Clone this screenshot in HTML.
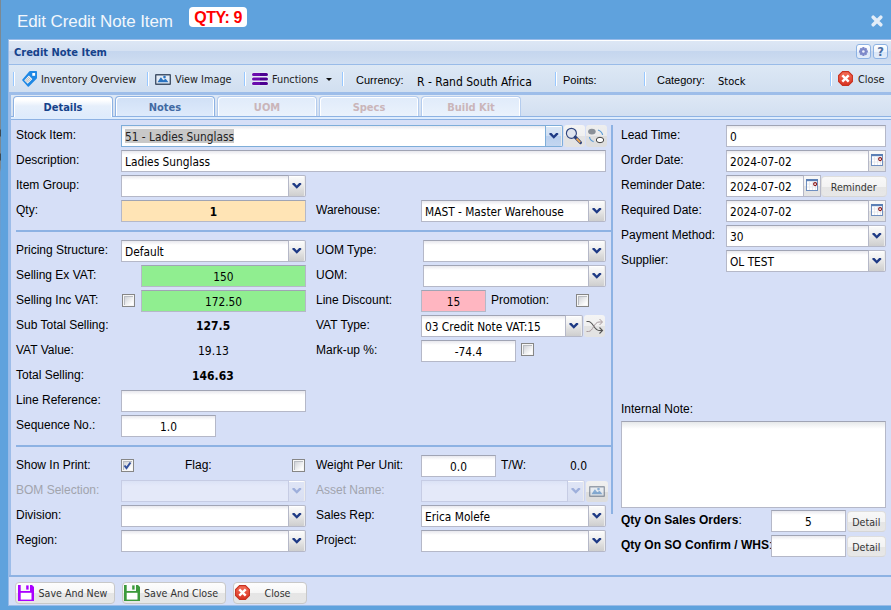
<!DOCTYPE html>
<html><head><meta charset="utf-8"><title>Edit Credit Note Item</title>
<style>
*{box-sizing:border-box;margin:0;padding:0}
html,body{width:891px;height:610px;overflow:hidden;background:#5fa2dd}
body{position:relative;font-family:"Liberation Sans",Arial,sans-serif;font-size:12px;color:#000}
.a{position:absolute;white-space:nowrap}
.tah{font-family:"DejaVu Sans Condensed","DejaVu Sans",sans-serif}
#edge{left:0;top:0;width:1px;height:610px;background:linear-gradient(#7b8993 0,#7b8993 129px,#3f4a52 130px,#3f4a52 136px,#7b8993 137px,#7b8993 153px,#3f4a52 154px,#3f4a52 160px,#7b8993 161px,#7b8993 168px,#6f9bc9 172px,#689fd3 240px,#5fa2dd 300px)}
#title{left:17px;top:11px;font-size:17px;line-height:22px;color:#f3f7fc;letter-spacing:-0.09px}
#qty{left:189px;top:7px;width:58px;height:20px;background:#fff;border-radius:4px;color:#ff0000;font-weight:bold;font-size:16px;line-height:22px;text-align:center;letter-spacing:-0.45px}
#panel{left:8px;top:39px;width:890px;height:567px;background:#9dbde9;border:1px solid #99bbe8}
#phead{left:9px;top:40px;width:882px;height:24px;background:linear-gradient(#fff 0,#fff 1px,#dde7f5 1px,#d5e1f2 10.5px,#c5d6ee 11.5px,#c9d9ef 17px,#d0def2 24px)}
#ptitle{left:14px;top:46px;font-size:11px;font-weight:bold;color:#15428b;line-height:14px}
#tbar{left:9px;top:65px;width:882px;height:27px;background:linear-gradient(#dde8f5,#d1dff0)}
#hline{left:9px;top:64px;width:882px;height:1px;background:#99bbe8}
#tstrip{left:11px;top:95px;width:880px;height:24px;background:linear-gradient(#dee8f5,#d2dff1 21px)}
#tspacer{left:11px;top:116px;width:880px;height:3px;background:#deecfd;border-top:1px solid #8db2e3}
#tline{left:11px;top:119px;width:880px;height:1px;background:#8db2e3}
#bodybg{left:11px;top:120px;width:880px;height:455px;background:#d6dff7}
.lbl{font-size:12px;line-height:14px}
.f{position:absolute;height:22px;background:#fff;border:1px solid #b5b8c8;border-top-color:#a0a4b4;font-family:"DejaVu Sans Condensed","DejaVu Sans",sans-serif;font-size:11.8px;line-height:20px;padding:1px 3px 0 3px;white-space:nowrap;overflow:hidden;background-image:linear-gradient(#e8e8ee,#fff 4px)}
.c{text-align:center}
.trg{position:absolute;width:17px;height:22px;border:1px solid #b5b8c8;border-left:0;border-radius:0 2px 2px 0;background:linear-gradient(#fcfcfc,#f1f1f1 35%,#dcdcdc 70%,#cecece);box-shadow:inset -1px 0 0 #ececec,inset 0 1px 0 #fff}
.trg svg{position:absolute;left:3px;top:6.5px}
.sep{position:absolute;height:2px;background:#8db2e3}
.btn{position:absolute;height:21px;border:1px solid #dedede;border-bottom-color:#d6d6d6;border-radius:4px;background:linear-gradient(#f8f8f8,#f3f3f3 50%,#e5e5e5 51%,#e7e7e7);font-family:"DejaVu Sans Condensed","DejaVu Sans",sans-serif;font-size:10.6px;line-height:21px;color:#333;white-space:nowrap;text-align:center}
.cb{position:absolute;width:13px;height:13px;border:1px solid #868686;background:#f6f6f6}
.cb:before{content:"";position:absolute;left:1px;top:1px;width:9px;height:9px;background:linear-gradient(135deg,#c9ccd2,#e9eaec 50%,#fdfdfd 85%);box-shadow:inset 1px 1px 0 #b9bcc2}
.tab{position:absolute;top:96px;height:20px;border:1px solid #8db2e3;border-bottom:0;border-radius:4px 4px 0 0;background:linear-gradient(#d0e0f6,#deeafb);box-shadow:inset 1px 1px 0 #fff,inset -1px 0 0 #fff;font-family:"DejaVu Sans Condensed","DejaVu Sans",sans-serif;font-weight:bold;font-size:11px;line-height:21px;text-align:center;color:#416aa3}
.tab.dis{color:#cab5b9;border-color:#b4ccee;background:linear-gradient(#e0ebfa,#eaf2fc)}
.tab.act{height:21px;background:linear-gradient(#fff,#fff 3px,#e6effb 9px,#deebfc);color:#15428b;z-index:3}
.tsep{position:absolute;top:72px;width:2px;height:14px;border-left:1px solid #98c8ff;border-right:1px solid #fff}
.tt{font-family:"DejaVu Sans Condensed","DejaVu Sans",sans-serif;font-size:10.8px;line-height:14px;color:#222}
.ibtn{position:absolute;border-radius:3px;background:linear-gradient(#f4f4f4,#f0f0f0 50%,#e3e3e3 51%,#e3e3e3)}
.dtrg{position:absolute;width:17px;height:22px;border:1px solid #b5b8c8;border-left:0;background:linear-gradient(#f8f8f8,#f2f2f2 50%,#e2e2e2 51%,#e4e4e4)}
.tool{position:absolute;top:44px;width:15px;height:15px;border:1px solid #8db2e3;border-radius:3px;background:linear-gradient(#fff,#eef4fc 50%,#d9e6f8 51%,#e3ecf9)}
</style></head><body>
<div id="edge" class="a"></div>
<div id="title" class="a">Edit Credit Note Item</div>
<div id="qty" class="a">QTY: 9</div>
<svg class="a" style="left:871px;top:15px" width="12" height="12" viewBox="0 0 12 12"><path d="M2.2 2.2 L9.8 9.8 M9.8 2.2 L2.2 9.8" stroke="#e3edf8" stroke-width="3.5" stroke-linecap="round"/></svg>
<div id="panel" class="a"></div>
<div id="phead" class="a"></div><div id="hline" class="a"></div>
<div id="ptitle" class="a tah">Credit Note Item</div>
<div class="tool" style="left:856px"><svg width="15" height="15" viewBox="0 0 15 15" style="position:absolute;left:-1px;top:-1px"><g transform="translate(7.4,7.5) scale(0.86)"><rect x="-1.35" y="-5.2" width="2.7" height="10.4" rx=".7" fill="#7d88c9" transform="rotate(0)"/><rect x="-1.35" y="-5.2" width="2.7" height="10.4" rx=".7" fill="#7d88c9" transform="rotate(45)"/><rect x="-1.35" y="-5.2" width="2.7" height="10.4" rx=".7" fill="#7d88c9" transform="rotate(90)"/><rect x="-1.35" y="-5.2" width="2.7" height="10.4" rx=".7" fill="#7d88c9" transform="rotate(135)"/><circle r="3.7" fill="#7d88c9"/><circle r="1.5" fill="#eef1fb"/></g></svg></div>
<div class="tool" style="left:873px;font-family:'DejaVu Sans',sans-serif;font-weight:bold;font-size:11.5px;line-height:15px;text-align:center;color:#4b6da3">?</div>
<div id="tbar" class="a"></div>
<div id="tstrip" class="a"></div><div id="tspacer" class="a"></div><div id="tline" class="a"></div><div id="bodybg" class="a"></div>
<div class="tsep" style="left:13px"></div>
<div class="tsep" style="left:147px"></div>
<div class="tsep" style="left:244px"></div>
<div class="tsep" style="left:342px"></div>
<div class="tsep" style="left:555px"></div>
<div class="tsep" style="left:644px"></div>
<div class="tsep" style="left:830px"></div>
<div class="a tt" style="left:41px;top:73px">Inventory Overview</div>
<div class="a tt" style="left:175px;top:73px">View Image</div>
<div class="a tt" style="left:272px;top:73px">Functions</div>
<div class="a" style="left:326px;top:78px;width:0;height:0;border:3px solid transparent;border-top:3px solid #111;border-bottom:0"></div>
<div class="a" style="left:356px;top:73px;font-size:11px;line-height:14px">Currency:</div>
<div class="a tah" style="left:417px;top:74px;font-size:12px;line-height:16px">R - Rand South Africa</div>
<div class="a" style="left:563px;top:73px;font-size:11px;line-height:14px">Points:</div>
<div class="a" style="left:657px;top:73px;font-size:11px;line-height:14px">Category:</div>
<div class="a tah" style="left:718px;top:74px;font-size:11px;line-height:16px">Stock</div>
<div class="a tt" style="left:858px;top:73px">Close</div>
<svg class="a" style="left:22px;top:71px;" width="15" height="16" viewBox="0 0 15 16"><path d="M8 0 H14.2 Q15 0 15 .8 V6.8 Q15 7.3 14.6 7.7 L6.9 15.4 Q6.3 16 5.7 15.4 L.4 9.6 Q-.1 9 .4 8.4 L7.2 .4 Q7.5 0 8 0 Z" fill="#1e88e5"/><rect x="10.3" y="2" width="2.8" height="2.8" fill="#fff"/><g transform="translate(6.3,8.6) rotate(45)"><rect x="-2.4" y="-3.3" width="4.8" height="6.6" fill="#fff"/><path d="M-1.2 -3.3V3.3 M0 -3.3V3.3 M1.2 -3.3V3.3 M-2.4 -1.6H2.4 M-2.4 0H2.4 M-2.4 1.6H2.4" stroke="#9a9a9a" stroke-width=".45"/></g></svg>
<svg class="a" style="left:155px;top:73.5px;opacity:1.0;" width="16" height="11" viewBox="0 0 16 11"><rect x=".7" y=".7" width="14.6" height="9.6" rx=".4" fill="#e4ecf6" stroke="#44546a" stroke-width="1.4"/><path d="M2.5 8.3 L5.6 3.6 Q5.9 3.2 6.2 3.6 L8.2 6.3 L10.2 4.9 Q10.6 4.6 10.9 5 L13.5 8.3 Z" fill="#2a73c0"/><circle cx="9.5" cy="3.1" r="1.3" fill="#2a73c0"/></svg>
<svg class="a" style="left:251px;top:72px;" width="18" height="14" viewBox="0 0 18 14"><g><rect x=".5" y="0.5" width="17" height="4" rx="2" fill="#f4f0fa"/><rect x=".5" y="5.0" width="17" height="4" rx="2" fill="#f4f0fa"/><rect x=".5" y="9.5" width="17" height="4" rx="2" fill="#f4f0fa"/><path d="M2.5 1 H9 V4 H2.5 A1.5 1.5 0 0 1 2.5 1 Z" fill="#6a0dad"/><path d="M9 1 H15.5 A1.5 1.5 0 0 1 15.5 4 H9 Z" fill="#4b0092"/><path d="M2.5 5.5 H9 V8.5 H2.5 A1.5 1.5 0 0 1 2.5 5.5 Z" fill="#6a0dad"/><path d="M9 5.5 H15.5 A1.5 1.5 0 0 1 15.5 8.5 H9 Z" fill="#4b0092"/><path d="M2.5 10 H9 V13 H2.5 A1.5 1.5 0 0 1 2.5 10 Z" fill="#6a0dad"/><path d="M9 10 H15.5 A1.5 1.5 0 0 1 15.5 13 H9 Z" fill="#4b0092"/></g></svg>
<svg class="a" style="left:838px;top:71px;" width="15" height="15" viewBox="0 0 15 15"><defs><linearGradient id="sg838" x1="0" y1="0" x2="0" y2="1"><stop offset="0" stop-color="#f4705a"/><stop offset="1" stop-color="#d93222"/></linearGradient></defs><path d="M4.6 .6 H10.4 L14.4 4.6 V10.4 L10.4 14.4 H4.6 L.6 10.4 V4.6 Z" fill="url(#sg838)" stroke="#c8301f" stroke-width="1.1"/><path d="M4.3 4.3 L10.7 10.7 M10.7 4.3 L4.3 10.7" stroke="#fff" stroke-width="2.4"/></svg>
<div class="tab act" style="left:13px;width:100px">Details</div>
<div class="tab " style="left:115px;width:100px">Notes</div>
<div class="tab dis" style="left:217px;width:100px">UOM</div>
<div class="tab dis" style="left:319px;width:100px">Specs</div>
<div class="tab dis" style="left:421px;width:100px">Build Kit</div>
<div class="a lbl" style="left:16px;top:128px;">Stock Item:</div>
<div class="f " style="left:121px;top:125px;width:425px;border-color:#7eadd9;"><span style="position:absolute;left:3px;top:3px;width:108.5px;height:14px;background:#c8c8c8"></span><span style="position:relative;color:#222">51 - Ladies Sunglass</span></div>
<div class="trg" style="left:546px;top:125px;border-color:#7eadd9;background:linear-gradient(#dbe7f6,#cfdff3 50%,#b9cfee 51%,#c3d6f0)"><svg width="10" height="7" viewBox="0 0 10 7"><path d="M0 .9 L.9 0 L2.5 0 L4.8 2.4 L7.1 0 L8.7 0 L9.6 .9 L4.8 5.7 Z" fill="#1e3a85"/></svg></div>
<div class="ibtn" style="left:564px;top:125px;width:21px;height:22px;"><svg width="21" height="22" viewBox="0 0 21 22" style="position:absolute;left:0;top:1px"><circle cx="7.4" cy="7.3" r="5" fill="#dfe4ee" stroke="#2f447e" stroke-width="1.15"/><path d="M11.2 11.2 L16.4 16.5" stroke="#2a3f7a" stroke-width="3.2" stroke-linecap="round"/><path d="M12.6 12.6 L16.2 16.3" stroke="#f0a850" stroke-width="1.9" stroke-linecap="butt"/></svg></div>
<div class="ibtn" style="left:586px;top:125px;width:21px;height:22px;background:linear-gradient(#eee,#eaeaea 50%,#dedede 51%,#dedede);"><svg width="21" height="22" viewBox="0 0 21 22" style="position:absolute;left:0;top:1px"><ellipse cx="5.9" cy="5.6" rx="3.8" ry="2.9" fill="#8a9098"/><ellipse cx="14" cy="14" rx="3.7" ry="2.7" fill="#fff" stroke="#444" stroke-width="1"/><path d="M12 4 Q16 5.5 16.6 9" fill="none" stroke="#5b9bd5" stroke-width="1.2"/><path d="M3.5 11 Q4 14.5 7.6 15.6" fill="none" stroke="#5b9bd5" stroke-width="1.2"/></svg></div>
<div class="a lbl" style="left:16px;top:153px;">Description:</div>
<div class="f " style="left:121px;top:150px;width:485px;">Ladies Sunglass</div>
<div class="a lbl" style="left:16px;top:178px;">Item Group:</div>
<div class="f " style="left:121px;top:175px;width:168px;"></div>
<div class="trg" style="left:289px;top:175px;"><svg width="10" height="7" viewBox="0 0 10 7"><path d="M0 .9 L.9 0 L2.5 0 L4.8 2.4 L7.1 0 L8.7 0 L9.6 .9 L4.8 5.7 Z" fill="#1e3a85"/></svg></div>
<div class="a lbl" style="left:16px;top:203px;">Qty:</div>
<div class="f c" style="left:121px;top:200px;width:185px;background:#ffe4b5;"><b>1</b></div>
<div class="a lbl" style="left:316px;top:203px;">Warehouse:</div>
<div class="f " style="left:421px;top:200px;width:168px;">MAST - Master Warehouse</div>
<div class="trg" style="left:589px;top:200px;"><svg width="10" height="7" viewBox="0 0 10 7"><path d="M0 .9 L.9 0 L2.5 0 L4.8 2.4 L7.1 0 L8.7 0 L9.6 .9 L4.8 5.7 Z" fill="#1e3a85"/></svg></div>
<div class="sep" style="left:16px;top:230px;width:597px"></div>
<div class="a lbl" style="left:16px;top:243px;">Pricing Structure:</div>
<div class="f " style="left:121px;top:240px;width:168px;">Default</div>
<div class="trg" style="left:289px;top:240px;"><svg width="10" height="7" viewBox="0 0 10 7"><path d="M0 .9 L.9 0 L2.5 0 L4.8 2.4 L7.1 0 L8.7 0 L9.6 .9 L4.8 5.7 Z" fill="#1e3a85"/></svg></div>
<div class="a lbl" style="left:16px;top:268px;">Selling Ex VAT:</div>
<div class="f c" style="left:141px;top:265px;width:165px;background:#90ee90;">150</div>
<div class="a lbl" style="left:16px;top:293px;">Selling Inc VAT:</div>
<div class="cb" style="left:122px;top:294px"></div>
<div class="f c" style="left:141px;top:290px;width:165px;background:#90ee90;">172.50</div>
<div class="a lbl" style="left:16px;top:318px;">Sub Total Selling:</div>
<div class="a tah" style="left:196px;top:318px;font-size:12px;line-height:16px;"><b>127.5</b></div>
<div class="a lbl" style="left:16px;top:343px;">VAT Value:</div>
<div class="a tah" style="left:198px;top:343px;font-size:12px;line-height:16px;">19.13</div>
<div class="a lbl" style="left:16px;top:368px;">Total Selling:</div>
<div class="a tah" style="left:192px;top:368px;font-size:12px;line-height:16px;"><b>146.63</b></div>
<div class="a lbl" style="left:16px;top:393px;">Line Reference:</div>
<div class="f " style="left:121px;top:390px;width:185px;"></div>
<div class="a lbl" style="left:16px;top:418px;">Sequence No.:</div>
<div class="f c" style="left:121px;top:415px;width:95px;">1.0</div>
<div class="a lbl" style="left:316px;top:243px;">UOM Type:</div>
<div class="f " style="left:423px;top:240px;width:166px;"></div>
<div class="trg" style="left:589px;top:240px;"><svg width="10" height="7" viewBox="0 0 10 7"><path d="M0 .9 L.9 0 L2.5 0 L4.8 2.4 L7.1 0 L8.7 0 L9.6 .9 L4.8 5.7 Z" fill="#1e3a85"/></svg></div>
<div class="a lbl" style="left:316px;top:268px;">UOM:</div>
<div class="f " style="left:423px;top:265px;width:166px;"></div>
<div class="trg" style="left:589px;top:265px;"><svg width="10" height="7" viewBox="0 0 10 7"><path d="M0 .9 L.9 0 L2.5 0 L4.8 2.4 L7.1 0 L8.7 0 L9.6 .9 L4.8 5.7 Z" fill="#1e3a85"/></svg></div>
<div class="a lbl" style="left:316px;top:293px;">Line Discount:</div>
<div class="f c" style="left:421px;top:290px;width:65px;background:#ffb6c1;">15</div>
<div class="a lbl" style="left:491px;top:293px;">Promotion:</div>
<div class="cb" style="left:576px;top:294px"></div>
<div class="a lbl" style="left:316px;top:318px;">VAT Type:</div>
<div class="f " style="left:421px;top:315px;width:145px;">03 Credit Note VAT:15</div>
<div class="trg" style="left:566px;top:315px;"><svg width="10" height="7" viewBox="0 0 10 7"><path d="M0 .9 L.9 0 L2.5 0 L4.8 2.4 L7.1 0 L8.7 0 L9.6 .9 L4.8 5.7 Z" fill="#1e3a85"/></svg></div>
<div class="ibtn" style="left:584px;top:315px;width:21px;height:22px;"><svg width="21" height="22" viewBox="0 0 21 22" style="position:absolute;left:0;top:1px"><path d="M2.5 5.5 H4.5 C9 5.5 10 14.5 15 14.5 H18" fill="none" stroke="#555" stroke-width="1.1"/><path d="M15.5 11.5 L18.5 14.5 L15.5 17.5" fill="none" stroke="#555" stroke-width="1.1"/><path d="M2.5 15.5 H4.5 C9 15.5 10 6 15 6 H18" fill="none" stroke="#a89a9e" stroke-width="1"/><path d="M15.5 3 L18.5 6 L15.5 9" fill="none" stroke="#a89a9e" stroke-width="1"/></svg></div>
<div class="a lbl" style="left:316px;top:343px;">Mark-up %:</div>
<div class="f c" style="left:421px;top:340px;width:95px;">-74.4</div>
<div class="cb" style="left:521px;top:343px"></div>
<div class="sep" style="left:16px;top:445px;width:597px"></div>
<div class="a lbl" style="left:16px;top:458px;">Show In Print:</div>
<div class="cb" style="left:121px;top:459px"><svg width="11" height="11" viewBox="0 0 11 11" style="position:absolute;left:0;top:0"><path d="M2.5 5.5 L4.5 8 L8.5 2.5" fill="none" stroke="#33509c" stroke-width="2"/></svg></div>
<div class="a lbl" style="left:185px;top:458px;">Flag:</div>
<div class="cb" style="left:292px;top:459px"></div>
<div class="a lbl" style="left:16px;top:483px;color:#a1a4ad">BOM Selection:</div>
<div class="f " style="left:121px;top:480px;width:168px;background:linear-gradient(#dbe2f6,#e4e9f9 5px);border-color:#c6cce4;"></div>
<div class="trg" style="left:289px;top:480px;border-color:#cdd3e9;background:linear-gradient(#dfe5f6,#d9dff2);"><svg width="10" height="7" viewBox="0 0 10 7"><path d="M0 .9 L.9 0 L2.5 0 L4.8 2.4 L7.1 0 L8.7 0 L9.6 .9 L4.8 5.7 Z" fill="#9eafdb"/></svg></div>
<div class="a lbl" style="left:16px;top:508px;">Division:</div>
<div class="f " style="left:121px;top:505px;width:168px;"></div>
<div class="trg" style="left:289px;top:505px;"><svg width="10" height="7" viewBox="0 0 10 7"><path d="M0 .9 L.9 0 L2.5 0 L4.8 2.4 L7.1 0 L8.7 0 L9.6 .9 L4.8 5.7 Z" fill="#1e3a85"/></svg></div>
<div class="a lbl" style="left:16px;top:533px;">Region:</div>
<div class="f " style="left:121px;top:530px;width:168px;"></div>
<div class="trg" style="left:289px;top:530px;"><svg width="10" height="7" viewBox="0 0 10 7"><path d="M0 .9 L.9 0 L2.5 0 L4.8 2.4 L7.1 0 L8.7 0 L9.6 .9 L4.8 5.7 Z" fill="#1e3a85"/></svg></div>
<div class="a lbl" style="left:316px;top:458px;">Weight Per Unit:</div>
<div class="f c" style="left:421px;top:455px;width:75px;">0.0</div>
<div class="a lbl" style="left:501px;top:458px;">T/W:</div>
<div class="a tah" style="left:570px;top:458px;font-size:12px;line-height:16px;">0.0</div>
<div class="a lbl" style="left:316px;top:483px;color:#a1a4ad">Asset Name:</div>
<div class="f " style="left:421px;top:480px;width:147px;background:linear-gradient(#dbe2f6,#e4e9f9 5px);border-color:#c6cce4;"></div>
<div class="trg" style="left:568px;top:480px;border-color:#cdd3e9;background:linear-gradient(#dfe5f6,#d9dff2);"><svg width="10" height="7" viewBox="0 0 10 7"><path d="M0 .9 L.9 0 L2.5 0 L4.8 2.4 L7.1 0 L8.7 0 L9.6 .9 L4.8 5.7 Z" fill="#9eafdb"/></svg></div>
<div class="ibtn" style="left:586px;top:480.5px;width:22px;height:21px;background:linear-gradient(#f0f0f0,#ebebeb 50%,#dddddd 51%,#dddddd);"><svg width="22" height="21" viewBox="0 0 22 21" style="position:absolute;left:0;top:1px"></svg></div>
<svg class="a" style="left:589px;top:486px;opacity:0.5;" width="16" height="11" viewBox="0 0 16 11"><rect x=".7" y=".7" width="14.6" height="9.6" rx=".4" fill="#e4ecf6" stroke="#44546a" stroke-width="1.4"/><path d="M2.5 8.3 L5.6 3.6 Q5.9 3.2 6.2 3.6 L8.2 6.3 L10.2 4.9 Q10.6 4.6 10.9 5 L13.5 8.3 Z" fill="#2a73c0"/><circle cx="9.5" cy="3.1" r="1.3" fill="#2a73c0"/></svg>
<div class="a lbl" style="left:316px;top:508px;">Sales Rep:</div>
<div class="f " style="left:421px;top:505px;width:168px;">Erica Molefe</div>
<div class="trg" style="left:589px;top:505px;"><svg width="10" height="7" viewBox="0 0 10 7"><path d="M0 .9 L.9 0 L2.5 0 L4.8 2.4 L7.1 0 L8.7 0 L9.6 .9 L4.8 5.7 Z" fill="#1e3a85"/></svg></div>
<div class="a lbl" style="left:316px;top:533px;">Project:</div>
<div class="f " style="left:421px;top:530px;width:168px;"></div>
<div class="trg" style="left:589px;top:530px;"><svg width="10" height="7" viewBox="0 0 10 7"><path d="M0 .9 L.9 0 L2.5 0 L4.8 2.4 L7.1 0 L8.7 0 L9.6 .9 L4.8 5.7 Z" fill="#1e3a85"/></svg></div>
<div class="a" style="left:611px;top:125px;width:2px;height:389px;background:#8db2e3"></div>
<div class="a lbl" style="left:621px;top:128px;">Lead Time:</div>
<div class="f " style="left:726px;top:125px;width:160px;">0</div>
<div class="a lbl" style="left:621px;top:153px;">Order Date:</div>
<div class="f " style="left:726px;top:150px;width:143px;">2024-07-02</div>
<div class="dtrg" style="left:869px;top:150px"></div>
<svg class="a" style="left:871px;top:154px;" width="12" height="12" viewBox="0 0 12 12"><rect x=".5" y=".5" width="11" height="11" fill="#fff" stroke="#6f8fc0" stroke-width="1"/><rect x="0" y="0" width="12" height="2.2" fill="#5b7fb5"/><path d="M3.5 2.5V11 M6.5 2.5V11 M9.5 2.5V11 M1 5H11 M1 8H11" stroke="#e3e6ec" stroke-width=".8"/><circle cx="9.1" cy="5.1" r="1.5" fill="#fff" stroke="#8b1a1a" stroke-width="1.1"/></svg>
<div class="a lbl" style="left:621px;top:178px;">Reminder Date:</div>
<div class="f " style="left:726px;top:175px;width:78px;">2024-07-02</div>
<div class="dtrg" style="left:804px;top:175px"></div>
<svg class="a" style="left:806px;top:179px;" width="12" height="12" viewBox="0 0 12 12"><rect x=".5" y=".5" width="11" height="11" fill="#fff" stroke="#6f8fc0" stroke-width="1"/><rect x="0" y="0" width="12" height="2.2" fill="#5b7fb5"/><path d="M3.5 2.5V11 M6.5 2.5V11 M9.5 2.5V11 M1 5H11 M1 8H11" stroke="#e3e6ec" stroke-width=".8"/><circle cx="9.1" cy="5.1" r="1.5" fill="#fff" stroke="#8b1a1a" stroke-width="1.1"/></svg>
<div class="btn" style="left:821px;top:175.5px;width:65.5px;">Reminder</div>
<div class="a lbl" style="left:621px;top:203px;">Required Date:</div>
<div class="f " style="left:726px;top:200px;width:143px;">2024-07-02</div>
<div class="dtrg" style="left:869px;top:200px"></div>
<svg class="a" style="left:871px;top:204px;" width="12" height="12" viewBox="0 0 12 12"><rect x=".5" y=".5" width="11" height="11" fill="#fff" stroke="#6f8fc0" stroke-width="1"/><rect x="0" y="0" width="12" height="2.2" fill="#5b7fb5"/><path d="M3.5 2.5V11 M6.5 2.5V11 M9.5 2.5V11 M1 5H11 M1 8H11" stroke="#e3e6ec" stroke-width=".8"/><circle cx="9.1" cy="5.1" r="1.5" fill="#fff" stroke="#8b1a1a" stroke-width="1.1"/></svg>
<div class="a lbl" style="left:621px;top:228px;">Payment Method:</div>
<div class="f " style="left:726px;top:225px;width:143px;">30</div>
<div class="trg" style="left:869px;top:225px;"><svg width="10" height="7" viewBox="0 0 10 7"><path d="M0 .9 L.9 0 L2.5 0 L4.8 2.4 L7.1 0 L8.7 0 L9.6 .9 L4.8 5.7 Z" fill="#1e3a85"/></svg></div>
<div class="a lbl" style="left:621px;top:253px;">Supplier:</div>
<div class="f " style="left:726px;top:250px;width:143px;">OL TEST</div>
<div class="trg" style="left:869px;top:250px;"><svg width="10" height="7" viewBox="0 0 10 7"><path d="M0 .9 L.9 0 L2.5 0 L4.8 2.4 L7.1 0 L8.7 0 L9.6 .9 L4.8 5.7 Z" fill="#1e3a85"/></svg></div>
<div class="a lbl" style="left:621px;top:402px;">Internal Note:</div>
<div class="f " style="left:621px;top:421px;width:265px;height:87px;background-image:linear-gradient(#e6e8ea,#fff 7px);"></div>
<div class="a lbl" style="left:621px;top:513px;"><b>Qty On Sales Orders</b>:</div>
<div class="f c" style="left:771px;top:510px;width:75px;">5</div>
<div class="btn" style="left:846.5px;top:510.5px;width:39.5px;">Detail</div>
<div class="a lbl" style="left:621px;top:538px;"><b>Qty On SO Confirm / WHS</b>:</div>
<div class="f c" style="left:771px;top:535px;width:75px;"></div>
<div class="btn" style="left:846.5px;top:535.5px;width:39.5px;">Detail</div>
<div class="a" style="left:9px;top:575px;width:882px;height:2px;background:#8db2e3"></div>
<div class="a" style="left:9px;top:577px;width:882px;height:28px;background:#d6dff7"></div>
<div class="btn" style="left:15px;top:582px;width:99.5px;height:21.5px;border-color:#c8c8c8;background:linear-gradient(#fdfdfd,#f6f6f6 49%,#e5e5e5 50%,#e6e6e6);"><span style="position:absolute;left:22.5px">Save And New</span></div>
<svg class="a" style="left:18px;top:585px;" width="16" height="16" viewBox="0 0 16 16"><path d="M0 0 H2.7 V6 H12 V0 H14 L16 2 V16 H0 Z" fill="#aa00ff"/><rect x="2.7" y="7.8" width="10.8" height="6.8" fill="#fff"/><rect x="8.2" y=".4" width="2.4" height="4.2" fill="#aa00ff"/></svg>
<div class="btn" style="left:122px;top:582px;width:104px;height:21.5px;border-color:#c8c8c8;background:linear-gradient(#fdfdfd,#f6f6f6 49%,#e5e5e5 50%,#e6e6e6);"><span style="position:absolute;left:21px">Save And Close</span></div>
<svg class="a" style="left:124px;top:585px;" width="16" height="16" viewBox="0 0 16 16"><path d="M0 0 H2.7 V6 H12 V0 H14 L16 2 V16 H0 Z" fill="#3c9a3c"/><rect x="2.7" y="7.8" width="10.8" height="6.8" fill="#fff"/><rect x="8.2" y=".4" width="2.4" height="4.2" fill="#3c9a3c"/></svg>
<div class="btn" style="left:232.5px;top:582px;width:74.5px;height:21.5px;border-color:#c8c8c8;background:linear-gradient(#fdfdfd,#f6f6f6 49%,#e5e5e5 50%,#e6e6e6);"><span style="position:absolute;left:31px">Close</span></div>
<svg class="a" style="left:235px;top:585px;" width="15" height="15" viewBox="0 0 15 15"><defs><linearGradient id="sg235" x1="0" y1="0" x2="0" y2="1"><stop offset="0" stop-color="#f4705a"/><stop offset="1" stop-color="#d93222"/></linearGradient></defs><path d="M4.6 .6 H10.4 L14.4 4.6 V10.4 L10.4 14.4 H4.6 L.6 10.4 V4.6 Z" fill="url(#sg235)" stroke="#c8301f" stroke-width="1.1"/><path d="M4.3 4.3 L10.7 10.7 M10.7 4.3 L4.3 10.7" stroke="#fff" stroke-width="2.4"/></svg>
</body></html>
